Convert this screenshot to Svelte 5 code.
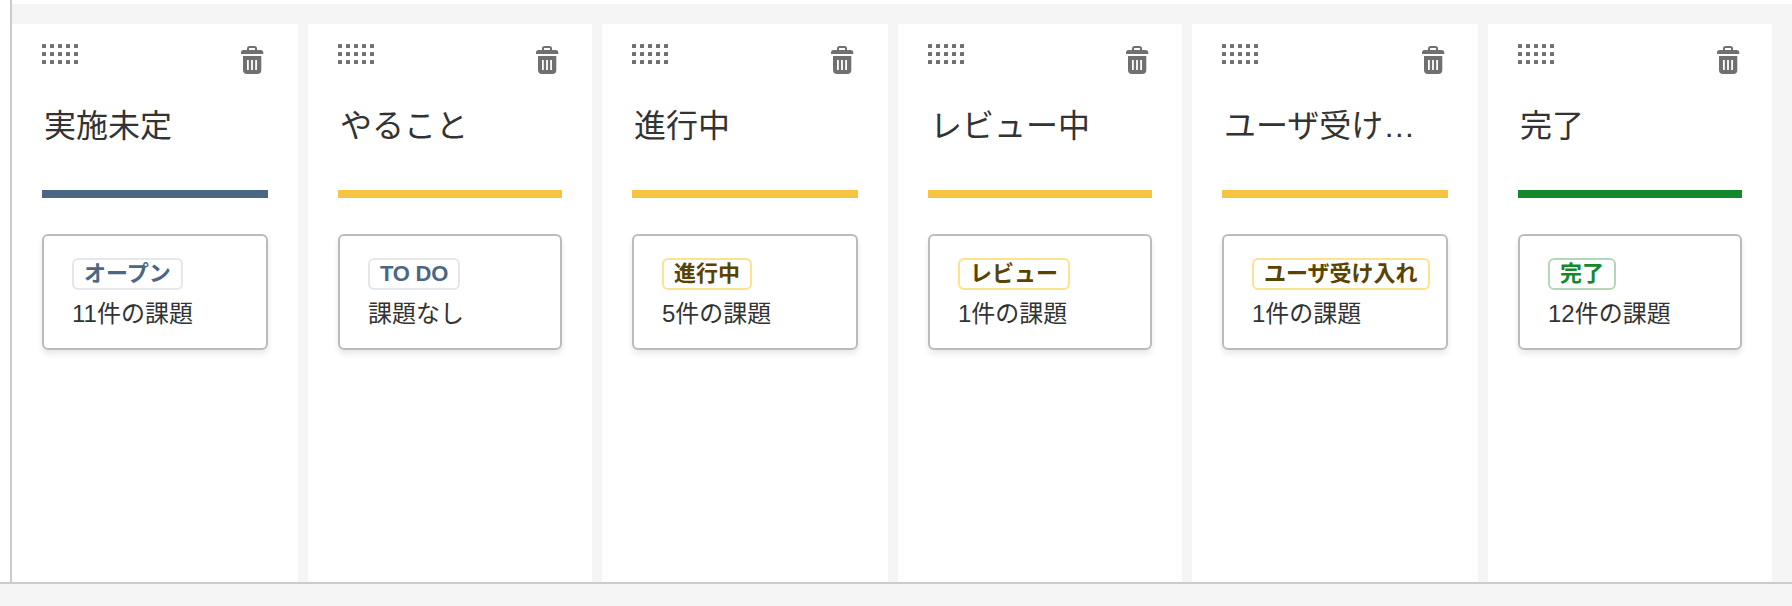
<script>
  const columns = [
    { title: '実施未定', tone: 'blue', badge: 'オープン', count: '11件の課題', width: 286, inset: 34 },
    { title: 'やること', tone: 'yellow', todo: true, badge: 'TO DO', count: '課題なし', width: 284, inset: 33 },
    { title: '進行中', tone: 'yellow', badge: '進行中', count: '5件の課題', width: 286, inset: 34 },
    { title: 'レビュー中', tone: 'yellow', badge: 'レビュー', count: '1件の課題', width: 284, inset: 33 },
    { title: 'ユーザ受け…', tone: 'yellow', badge: 'ユーザ受け入れ', count: '1件の課題', width: 286, inset: 33 },
    { title: '完了', tone: 'green', badge: '完了', count: '12件の課題', width: 284, inset: 32 }
  ];
  const rows = [0, 8, 16];
  const cols = [0, 8, 16, 24, 32];
</script>

<main>
  <div class="frame">
    <div class="board">
      {#each columns as c}
        <section class="column {c.tone}" style="width: {c.width}px">
          <header style="padding-right: {c.inset}px">
            <svg class="grip" width="36" height="20" viewBox="0 0 36 20">
              {#each rows as y}
                {#each cols as x}
                  <rect {x} {y} width="4" height="4" rx="0.6" />
                {/each}
              {/each}
            </svg>
            <svg class="trash" width="23" height="28" viewBox="0 0 23 28">
              <path d="M7 4V2.5Q7 1 8.5 1h5Q15 1 15 2.5V4" fill="none" stroke="#707070" stroke-width="2" />
              <path d="M0 8V6.5Q0 4 2.5 4h17Q22.3 4 22.3 6.5V8Z" />
              <path fill-rule="evenodd" d="M2 10h18.3v14q0 4-4 4H6q-4 0-4-4ZM6 14v10h1.8V14ZM10.1 14v10h1.8V14ZM14.2 14v10h1.8V14Z" />
            </svg>
          </header>
          <h2>{c.title}</h2>
          <div class="bar"></div>
          <div class="card">
            <span class="badge" class:todo={c.todo}>{c.badge}</span>
            <p>{c.count}</p>
          </div>
        </section>
      {/each}
    </div>
  </div>
</main>

<style>
  :global(body) {
    margin: 0;
  }
  main {
    height: 606px;
    background: #f5f5f5;
    overflow: hidden;
    font-family: 'Liberation Sans', 'Noto Sans CJK JP', sans-serif;
    color: #333;
  }
  .frame {
    box-sizing: border-box;
    height: 584px;
    padding-left: 10px;
    border-bottom: 2px solid #ccc;
    background: #fff;
  }
  .board {
    box-sizing: border-box;
    height: 582px;
    display: flex;
    gap: 10px;
    padding-top: 24px;
    border-left: 2px solid #ccc;
    background: #f5f5f5;
    box-shadow: inset 0 4px #fff;
  }
  .column {
    box-sizing: border-box;
    flex: none;
    padding: 20px 0 0 30px;
    background: #fff;
  }
  header {
    display: flex;
    justify-content: space-between;
    height: 55px;
  }
  svg {
    display: block;
    flex: none;
    fill: #707070;
  }
  .trash {
    margin-top: 2px;
  }
  h2 {
    margin: 0 0 0 2px;
    height: 91px;
    font-size: 32px;
    line-height: 54px;
    font-weight: 400;
    white-space: nowrap;
  }
  .bar {
    height: 8px;
    margin-right: 30px;
    background: #f6c342;
  }
  .card {
    box-sizing: border-box;
    height: 116px;
    margin: 36px 30px 0 0;
    padding: 22px 0 0 28px;
    border: 2px solid #bbb;
    border-radius: 6px;
    box-shadow: 0 4px 6px rgba(0, 0, 0, 0.09);
  }
  .badge {
    box-sizing: border-box;
    display: block;
    width: fit-content;
    height: 32px;
    padding: 0 10px;
    border: 2px solid #ffe28c;
    border-radius: 6px;
    color: #594300;
    font-size: 22px;
    font-weight: 700;
    line-height: 28px;
    white-space: nowrap;
  }
  p {
    margin: 7px 0 0;
    font-size: 24px;
    line-height: 34px;
    white-space: nowrap;
  }
  .blue .bar {
    background: #4a6785;
  }
  .blue .badge,
  .badge.todo {
    border-color: #e4e8ed;
    color: #4a6785;
  }
  .badge.todo {
    letter-spacing: -0.25px;
  }
  .green .bar {
    background: #14892c;
  }
  .green .badge {
    border-color: #b2d8b9;
    color: #14892c;
  }
</style>
